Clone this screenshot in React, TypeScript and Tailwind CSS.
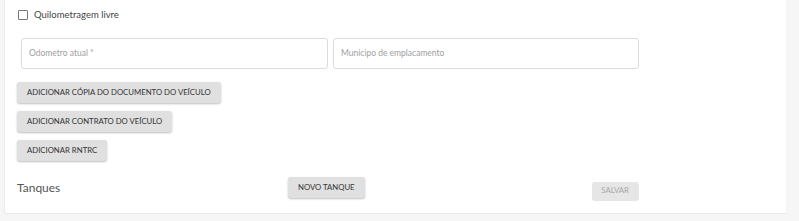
import React from 'react';

function GrayButton({ children, disabled }: { children: React.ReactNode; disabled?: boolean }) {
  if (disabled) {
    return (
      <button
        disabled
        className="h-[19px] w-[47px] rounded-[3px] bg-[#e6e6e6] text-[#a8a8a8] text-[7.75px] font-normal leading-none"
      >
        {children}
      </button>
    );
  }
  return (
    <button className="h-[21px] px-[10px] rounded-[3px] bg-[#e0e0e0] text-[#333] text-[7.75px] font-normal leading-none shadow-[0_1px_2px_rgba(0,0,0,0.25)]">
      {children}
    </button>
  );
}

export default function App() {
  return (
    <div className="w-[799px] h-[221px] bg-[#f6f6f6] overflow-hidden" style={{ fontFamily: 'Lato, "Open Sans", sans-serif' }}>
      <div className="ml-[4px] w-[782px] h-[213px] bg-white border-l border-[#ececec] shadow-[0_1px_1px_rgba(0,0,0,0.04)]">
        <div className="pl-[13px] pt-[8px] flex items-center gap-[6px]">
          <span className="w-[10px] h-[10px] border-[1.5px] border-[#777] rounded-[1px]" />
          <span className="text-[9.5px] text-[#444]">Quilometragem livre</span>
        </div>

        <div className="mt-[16px] ml-[16px] flex gap-[5px]">
          <div className="w-[307px] h-[31px] border border-[#dcdcdc] rounded-[3px] flex items-center pl-[7px]">
            <span className="text-[8.5px] text-[#a0a0a0]">Odometro atual *</span>
          </div>
          <div className="w-[306px] h-[31px] border border-[#dcdcdc] rounded-[3px] flex items-center pl-[7px]">
            <span className="text-[8.5px] text-[#a0a0a0]">Municipo de emplacamento</span>
          </div>
        </div>

        <div className="mt-[13px] ml-[12px] flex flex-col items-start gap-[8px]">
          <GrayButton>ADICIONAR CÓPIA DO DOCUMENTO DO VEÍCULO</GrayButton>
          <GrayButton>ADICIONAR CONTRATO DO VEÍCULO</GrayButton>
          <GrayButton>ADICIONAR RNTRC</GrayButton>
        </div>

        <div className="mt-[14px] ml-[12px] flex items-center">
          <span className="w-[271px] text-[12px] text-[#555]">Tanques</span>
          <GrayButton>NOVO TANQUE</GrayButton>
          <div className="ml-[227px]">
            <GrayButton disabled>SALVAR</GrayButton>
          </div>
        </div>
      </div>
    </div>
  );
}
